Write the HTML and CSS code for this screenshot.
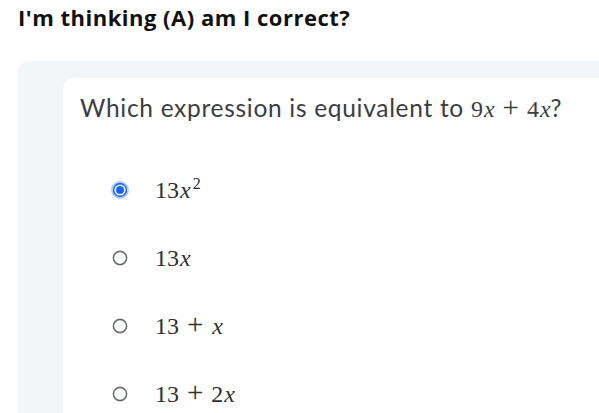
FILE: index.html
```html
<!DOCTYPE html>
<html lang="en">
<head>
<meta charset="utf-8">
<title>I'm thinking (A) am I correct?</title>
<link rel="stylesheet" href="styles.css">
</head>
<body>
<h1 class="title">I'm thinking (A) am I correct?</h1>
<div class="panel">
  <div class="card">
    <p class="question">Which expression is equivalent to <span class="math"><span class="mn">9</span><span class="mi">x</span><span class="mo">+</span><span class="mn">4</span><span class="mi">x</span></span>?</p>
    <ul class="options">
      <li class="option">
        <svg class="radio" width="18" height="18" viewBox="0 0 18 18"><circle cx="9" cy="9" r="8.2" fill="none" stroke="#a9c6f7" stroke-width="1.4"/><circle cx="9" cy="9" r="6.4" fill="#fff" stroke="#1865f2" stroke-width="1.6"/><circle cx="9" cy="9" r="4" fill="#1865f2"/></svg>
        <span class="math"><span class="mn">13</span><span class="mi">x</span><sup class="sup">2</sup></span>
      </li>
      <li class="option">
        <svg class="radio" width="18" height="18" viewBox="0 0 18 18"><circle cx="9" cy="9" r="6.6" fill="#fff" stroke="#6e7174" stroke-width="1.6"/></svg>
        <span class="math"><span class="mn">13</span><span class="mi">x</span></span>
      </li>
      <li class="option">
        <svg class="radio" width="18" height="18" viewBox="0 0 18 18"><circle cx="9" cy="9" r="6.6" fill="#fff" stroke="#6e7174" stroke-width="1.6"/></svg>
        <span class="math"><span class="mn">13</span><span class="mo">+</span><span class="mi">x</span></span>
      </li>
      <li class="option">
        <svg class="radio" width="18" height="18" viewBox="0 0 18 18"><circle cx="9" cy="9" r="6.6" fill="#fff" stroke="#6e7174" stroke-width="1.6"/></svg>
        <span class="math"><span class="mn">13</span><span class="mo">+</span><span class="mn">2</span><span class="mi">x</span></span>
      </li>
    </ul>
  </div>
</div>
</body>
</html>
```
FILE: styles.css
```css
html, body {
  margin: 0;
  background: #ffffff;
  overflow: hidden;
}
body {
  font-family: Lato, "Open Sans", "Liberation Sans", sans-serif;
  height: 413px;
}
.title {
  margin: 0;
  padding: 2px 0 0 18px;
  font-family: "Open Sans", "Noto Sans", sans-serif;
  font-size: 22px;
  line-height: 30px;
  font-weight: 700;
  color: #111111;
  letter-spacing: 0.5px;
}
.panel {
  box-sizing: border-box;
  margin: 29px 0 0 18px;
  background: #f3f6f9;
  border-top-left-radius: 10px;
  padding: 17px 0 0 45px;
  height: 352px;
}
.card {
  box-sizing: border-box;
  background: #ffffff;
  border-top-left-radius: 12px;
  padding: 13px 0 0 17px;
  height: 335px;
}
.question {
  margin: 0;
  font-size: 24.5px;
  line-height: 34px;
  color: #3b3e41;
  white-space: nowrap;
  letter-spacing: 0.7px;
}
.math {
  font-family: "Liberation Serif", "DejaVu Serif", serif;
  font-size: 24px;
  line-height: 1;
  color: #2d2f31;
  letter-spacing: 0;
}
.question .math {
  font-size: 24px;
  color: #3b3e41;
}
.mi {
  font-style: italic;
  margin-left: 1px;
}
.mo {
  font-size: 29px;
  line-height: 0;
  margin: 0 8px;
}
.sup {
  font-size: 16px;
  vertical-align: 9px;
  line-height: 0;
  margin-left: 2px;
}
.options {
  list-style: none;
  margin: 31px 0 0 0;
  padding: 0;
  display: flex;
  flex-direction: column;
}
.option {
  display: flex;
  align-items: center;
  height: 68px;
}
.radio {
  margin-left: 31px;
  margin-right: 26px;
  flex: none;
}
```
